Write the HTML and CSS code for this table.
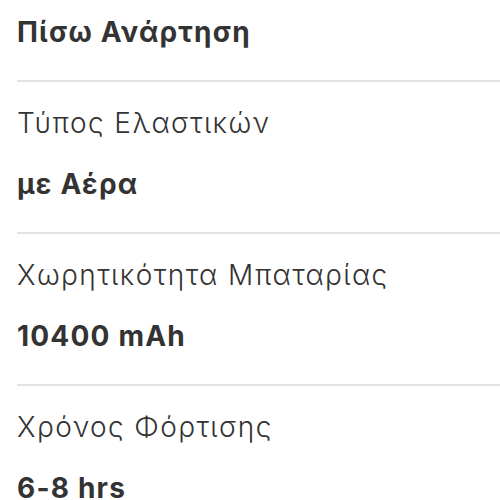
FILE: index.html
```html
<!DOCTYPE html>
<html lang="el">
<head>
<meta charset="utf-8">
<title>Χαρακτηριστικά</title>
<link rel="stylesheet" href="styles.css">
</head>
<body>
<div class="specs">
  <div class="spec spec-first">
    <div class="value">Πίσω Ανάρτηση</div>
  </div>
  <div class="spec">
    <div class="label">Τύπος Ελαστικών</div>
    <div class="value">με Αέρα</div>
  </div>
  <div class="spec">
    <div class="label">Χωρητικότητα Μπαταρίας</div>
    <div class="value">10400 mAh</div>
  </div>
  <div class="spec">
    <div class="label">Χρόνος Φόρτισης</div>
    <div class="value">6-8 hrs</div>
  </div>
</div>
</body>
</html>
```
FILE: styles.css
```css
html, body {
  margin: 0;
  padding: 0;
  background: #ffffff;
  overflow: hidden;
}
body {
  font-family: Inter, "Noto Sans", sans-serif;
  color: #333333;
  font-size: 28px;
  line-height: 38px;
}
.specs {
  padding-left: 17px;
}
.spec {
  border-top: 2px solid #e3e3e3;
  padding: 22px 0 29px;
  display: flex;
  flex-direction: column;
  gap: 23px;
}
.spec-first {
  border-top: none;
  padding-top: 13px;
}
.label {
  font-weight: 300;
  letter-spacing: 1.4px;
}
.value {
  font-weight: 700;
  letter-spacing: 1.2px;
}
```
